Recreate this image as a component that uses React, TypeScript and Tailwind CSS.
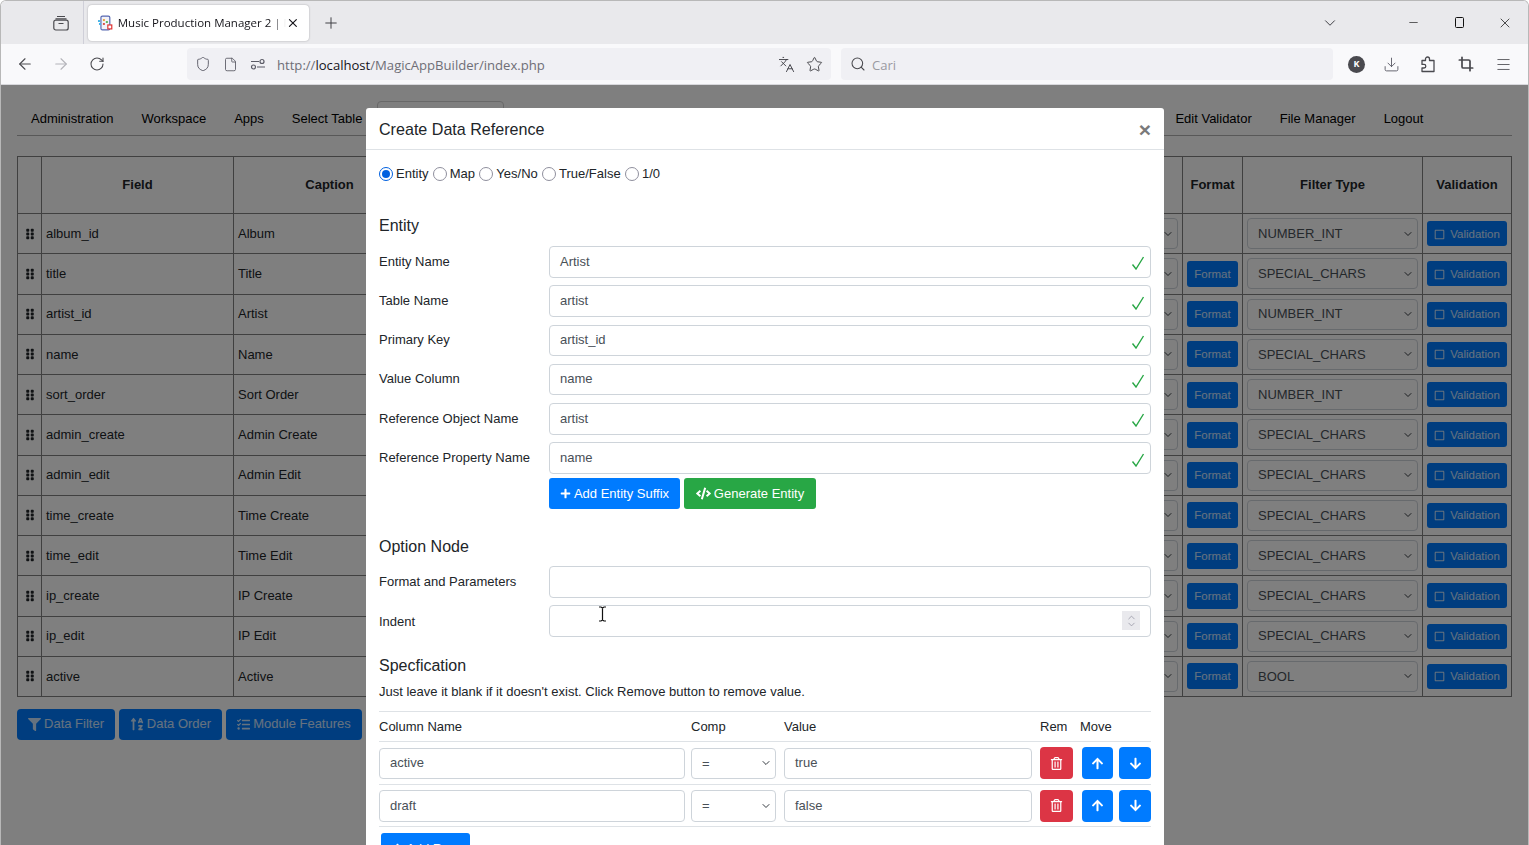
import React from "react";
import {
  ArrowLeft,
  ArrowRight,
  ChevronDown,
  Crop,
  Download,
  File,
  Languages,
  Menu,
  Minus,
  Plus,
  RotateCw,
  Search,
  Shield,
  Star,
  X,
} from "lucide-react";
import {
  FaArrowDown,
  FaArrowUp,
  FaCode,
  FaFilter,
  FaGripVertical,
  FaPlus,
  FaRegSquare,
  FaRegTrashAlt,
  FaSortAlphaUp,
  FaTasks,
} from "react-icons/fa";

const rows = [
  { field: "album_id", caption: "Album", filter: "NUMBER_INT", format: false },
  { field: "title", caption: "Title", filter: "SPECIAL_CHARS", format: true },
  { field: "artist_id", caption: "Artist", filter: "NUMBER_INT", format: true },
  { field: "name", caption: "Name", filter: "SPECIAL_CHARS", format: true },
  { field: "sort_order", caption: "Sort Order", filter: "NUMBER_INT", format: true },
  { field: "admin_create", caption: "Admin Create", filter: "SPECIAL_CHARS", format: true },
  { field: "admin_edit", caption: "Admin Edit", filter: "SPECIAL_CHARS", format: true },
  { field: "time_create", caption: "Time Create", filter: "SPECIAL_CHARS", format: true },
  { field: "time_edit", caption: "Time Edit", filter: "SPECIAL_CHARS", format: true },
  { field: "ip_create", caption: "IP Create", filter: "SPECIAL_CHARS", format: true },
  { field: "ip_edit", caption: "IP Edit", filter: "SPECIAL_CHARS", format: true },
  { field: "active", caption: "Active", filter: "BOOL", format: true },
];

const entityFields = [
  { label: "Entity Name", value: "Artist" },
  { label: "Table Name", value: "artist" },
  { label: "Primary Key", value: "artist_id" },
  { label: "Value Column", value: "name" },
  { label: "Reference Object Name", value: "artist" },
  { label: "Reference Property Name", value: "name" },
];

const radios = [
  { label: "Entity", checked: true },
  { label: "Map", checked: false },
  { label: "Yes/No", checked: false },
  { label: "True/False", checked: false },
  { label: "1/0", checked: false },
];

const TabGroupIcon = () => (
  <svg width="16" height="16" viewBox="0 0 16 16" fill="none" stroke="#4a4a4f" strokeWidth="1.2">
    <path d="M4 1.500h8" />
    <path d="M2.500 3.800h11" />
    <rect x="0.800" y="5.200" width="14.400" height="9.800" rx="2" />
    <path d="M5.500 8.500h5" />
  </svg>
);

const Favicon = () => (
  <svg width="16" height="16" viewBox="0 0 16 16">
    <rect x="4" y="1" width="9" height="14" rx="1.500" fill="#f2f2f8" stroke="#5566b0" strokeWidth="1.200" />
    <rect x="1" y="5" width="2" height="2" fill="#45b4e8" />
    <rect x="2" y="8" width="2" height="2" fill="#45b4e8" />
    <rect x="6" y="4" width="2" height="2" fill="#e9a23b" />
    <rect x="9" y="6" width="2" height="2" fill="#5cb85c" />
    <rect x="6" y="8" width="2" height="2" fill="#d9534f" />
    <rect x="11" y="10" width="4" height="4" fill="#fff" stroke="#e03131" strokeWidth="1.200" />
  </svg>
);

const PermIcon = () => (
  <svg width="16" height="16" viewBox="0 0 16 16" fill="none" stroke="#5b5b66" strokeWidth="1.2">
    <path d="M1 5.500h8" />
    <circle cx="12" cy="5.500" r="2" />
    <path d="M7 11h8" />
    <circle cx="3.500" cy="11" r="2" />
  </svg>
);

const PuzzleIcon = () => (
  <svg width="16" height="17" viewBox="0 0 16 17" fill="none" stroke="#4a4a4f" strokeWidth="1.3" strokeLinejoin="round">
    <path d="M2 4.500h3.500V3a2 2 0 0 1 4 0v1.500H14v11H2v-3.500h2a1.800 1.800 0 0 0 0-3.600H2z" />
  </svg>
);

const CheckMark = () => (
  <svg width="14" height="14" viewBox="0 0 14 14" fill="none" stroke="#28a745" strokeWidth="1.4">
    <path d="M1.500 8.500 L5 13 L12.500 1" />
  </svg>
);

const IBeam = () => (
  <svg width="9" height="16" viewBox="0 0 9 16" fill="none" stroke="#111" strokeWidth="1.2">
    <path d="M1 1h2l1.500 1 1.500-1h2M4.500 2v12M1 15h2l1.500-1 1.500 1h2" />
  </svg>
);

const Field = ({ value, check }: { value?: string; check?: boolean }) => (
  <div className="flex h-[31.500px] flex-1 items-center justify-between rounded-[4px] border border-[#ced4da] bg-white pb-[1px] pl-[10px] pr-[5px] text-[#495057]">
    <span>{value}</span>
    {check && (
      <span className="mt-[4px]">
        <CheckMark />
      </span>
    )}
  </div>
);

const SelectBox = ({ value, className }: { value: string; className: string }) => (
  <div
    className={`flex items-center justify-between rounded-[4px] border border-[#ced4da] bg-white pl-[10px] pr-[3px] text-[#495057] ${className}`}
  >
    <span>{value}</span>
    <ChevronDown size={12} strokeWidth={2} className="text-[#343a40]" />
  </div>
);

const Radio = ({ checked }: { checked: boolean }) =>
  checked ? (
    <span className="flex h-[14px] w-[14px] items-center justify-center rounded-full border-[1.5px] border-[#0060df] bg-white">
      <span className="h-[8px] w-[8px] rounded-full bg-[#0060df]" />
    </span>
  ) : (
    <span className="h-[14px] w-[14px] rounded-full border-[1.5px] border-[#8f8f9d] bg-white" />
  );

const PageButton = ({ icon, label, width }: { icon: React.ReactNode; label: string; width: string }) => (
  <div className={`flex h-[31px] items-center justify-center gap-[3px] rounded-[4px] bg-[#007bff] text-white/80 ${width}`}>
    {icon}
    {label}
  </div>
);

const IconButton = ({ className, children }: { className: string; children: React.ReactNode }) => (
  <div className={`flex h-[32px] items-center justify-center rounded-[4px] text-white ${className}`}>
    {children}
  </div>
);

const SpecRow = ({ column, value }: { column: string; value: string }) => (
  <div className="grid grid-cols-[312px_93px_256px_42px_37px_32px] items-center border-b border-[#dee2e6] pb-[4.500px] pt-[5px]">
    <div className="mr-[6px] flex">
      <Field value={column} />
    </div>
    <SelectBox value="=" className="mr-[8px] h-[31.500px]" />
    <div className="mr-[8px] flex">
      <Field value={value} />
    </div>
    <IconButton className="mr-[9px] bg-[#dc3545]">
      <FaRegTrashAlt size={13} />
    </IconButton>
    <IconButton className="mr-[6px] bg-[#007bff]">
      <FaArrowUp size={13} />
    </IconButton>
    <IconButton className="bg-[#007bff]">
      <FaArrowDown size={13} />
    </IconButton>
  </div>
);

const BrowserChrome = () => (
  <div className="font-['Open_Sans',sans-serif] text-[12px] text-[#15141a]">
    <div className="flex h-[43px] items-center bg-[#e9e9ec]">
      <div className="flex h-full w-[83px] items-center justify-end border-r border-[#cfcfd8] pr-[14px]">
        <TabGroupIcon />
      </div>
      <div className="ml-[4px] flex h-[36px] w-[221px] items-center rounded-[4px] bg-white pl-[9px] pr-[9px] shadow-[0_0_2px_rgba(0,0,0,0.3)]">
        <Favicon />
        <span className="ml-[5px] w-[171px] overflow-hidden whitespace-nowrap text-[11.500px] [mask-image:linear-gradient(to_right,black_92%,transparent)]">
          Music Production Manager 2 | M
        </span>
        <X size={14} strokeWidth={2} />
      </div>
      <Plus size={18} strokeWidth={1.3} className="ml-[13px] text-[#3c3c42]" />
      <div className="flex-1" />
      <ChevronDown size={18} strokeWidth={1.3} className="mr-[68px] text-[#3c3c42]" />
      <Minus size={13} strokeWidth={1.2} className="mr-[35px] text-[#111]" />
      <div className="mr-[33px] h-[11px] w-[9px] rounded-[1.500px] border border-[#111]" />
      <X size={16} strokeWidth={1.1} className="mr-[15px] text-[#111]" />
    </div>
    <div className="flex h-[40px] items-center bg-[#f9f9fb]">
      <ArrowLeft size={18} strokeWidth={1.5} className="ml-[15px] text-[#4a4a4f]" />
      <ArrowRight size={18} strokeWidth={1.5} className="ml-[18px] text-[#b4b4ba]" />
      <RotateCw size={16} strokeWidth={1.6} className="ml-[19px] text-[#4a4a4f]" />
      <div className="ml-[82px] flex h-[32px] w-[644px] items-center rounded-[4px] bg-[#f0f0f4] pl-[8px] pr-[8px] text-[13.100px] text-[#6e6e76]">
        <Shield size={16} strokeWidth={1.4} className="text-[#5b5b66]" />
        <File size={15} strokeWidth={1.4} className="ml-[12px] text-[#5b5b66]" />
        <span className="ml-[12px]">
          <PermIcon />
        </span>
        <span className="ml-[11px] pt-[3px]">
          http://<span className="text-[#15141a]">localhost</span>/MagicAppBuilder/index.php
        </span>
        <div className="flex-1" />
        <Languages size={17} strokeWidth={1.3} className="text-[#3c3c42]" />
        <Star size={17} strokeWidth={1.4} className="ml-[11px] text-[#4a4a4f]" />
      </div>
      <div className="ml-[10px] flex h-[32px] w-[492px] items-center rounded-[4px] bg-[#f0f0f4] pl-[9px] text-[13.100px] text-[#9a9aa2]">
        <Search size={16} strokeWidth={1.6} className="text-[#4a4a4f]" />
        <span className="ml-[6px] pt-[3px]">Cari</span>
      </div>
      <div className="ml-[15px] flex h-[17px] w-[17px] items-center justify-center rounded-full bg-[#4a4a4f] text-[9px] font-bold text-white">
        K
      </div>
      <Download size={17} strokeWidth={1.3} className="ml-[18px] text-[#5b5b66]" />
      <span className="ml-[20px]">
        <PuzzleIcon />
      </span>
      <Crop size={16} strokeWidth={2.6} className="ml-[22px] text-[#4a4a4f]" />
      <Menu size={17} strokeWidth={1.2} className="ml-[21px] text-[#4a4a4f]" />
    </div>
  </div>
);

const PageBehind = () => (
  <div className="flex-1 bg-white px-[16px] pt-[16px] font-['Liberation_Sans',sans-serif] text-[13px] text-[#212529]">
    <div className="flex h-[35px] border-b border-[#b0b0b0] text-black">
      {["Administration", "Workspace", "Apps", "Select Table"].map((item) => (
        <div key={item} className="flex items-center px-[14px] pt-[1px]">
          {item}
        </div>
      ))}
      <div className="ml-[1px] h-[35px] w-[127px] rounded-t-[4px] border border-[#d0d0d0]" />
      <div className="w-[657px]" />
      {["Edit Validator", "File Manager", "Logout"].map((item) => (
        <div key={item} className="flex items-center px-[14px] pt-[1px]">
          {item}
        </div>
      ))}
    </div>
    <table className="mt-[20px] w-[1494px] table-fixed border-collapse">
      <colgroup>
        <col className="w-[24px]" />
        <col className="w-[192px]" />
        <col className="w-[192px]" />
        <col className="w-[757px]" />
        <col className="w-[60px]" />
        <col className="w-[180px]" />
        <col className="w-[89px]" />
      </colgroup>
      <thead>
        <tr className="h-[57px] font-bold">
          <th className="border border-[#808080]" />
          <th className="border border-[#808080]">Field</th>
          <th className="border border-[#808080]">Caption</th>
          <th className="border border-[#808080]" />
          <th className="border border-[#808080]">Format</th>
          <th className="border border-[#808080]">Filter Type</th>
          <th className="border border-[#808080]">Validation</th>
        </tr>
      </thead>
      <tbody>
        {rows.map((row) => (
          <tr key={row.field} className="h-[40.25px]">
            <td className="border border-[#808080] pl-[6px]">
              <FaGripVertical size={12} className="text-[#212529]" />
            </td>
            <td className="border border-[#808080] px-[4px]">{row.field}</td>
            <td className="border border-[#808080] px-[4px]">{row.caption}</td>
            <td className="border border-[#808080] px-[4px]">
              <SelectBox value="" className="ml-auto h-[31px] w-[180px]" />
            </td>
            <td className="border border-[#808080] px-[4px]">
              {row.format && (
                <div className="flex h-[26px] items-center justify-center rounded-[3px] bg-[#007bff] pt-[1px] text-[11.500px] text-white/80">
                  Format
                </div>
              )}
            </td>
            <td className="border border-[#808080] px-[4px]">
              <SelectBox value={row.filter} className="h-[31px]" />
            </td>
            <td className="border border-[#808080] px-[4px]">
              <div className="flex h-[25px] items-center justify-center gap-[5px] rounded-[3px] bg-[#007bff] pt-[1px] text-[11.500px] text-white/80">
                <FaRegSquare size={11} />
                Validation
              </div>
            </td>
          </tr>
        ))}
      </tbody>
    </table>
    <div className="mt-[11.500px] flex gap-[4px]">
      <PageButton icon={<FaFilter size={13} />} label="Data Filter" width="w-[98px]" />
      <PageButton icon={<FaSortAlphaUp size={14} />} label="Data Order" width="w-[103px]" />
      <PageButton icon={<FaTasks size={13} />} label="Module Features" width="w-[136px]" />
    </div>
  </div>
);

const Modal = () => (
  <div className="absolute left-[365px] top-[107px] h-[737px] w-[798px] overflow-hidden rounded-t-[3px] bg-white font-['Liberation_Sans',sans-serif] text-[13px] text-[#212529]">
    <div className="flex h-[42px] items-center justify-between border-b border-[#dee2e6] pl-[13px] pr-[13px] pt-[2px]">
      <span className="text-[16.100px]">Create Data Reference</span>
      <span className="text-[21px] font-bold leading-none text-[#7a7a7a]">×</span>
    </div>
    <div className="px-[13px]">
      <div className="mt-[16px] flex h-[16px] items-center gap-[4.250px]">
        {radios.map((radio) => (
          <label key={radio.label} className="flex items-center gap-[3px]">
            <Radio checked={radio.checked} />
            {radio.label}
          </label>
        ))}
      </div>
      <div className="mt-[34px] text-[16px] leading-[20px]">Entity</div>
      <div className="mt-[10px] flex flex-col">
        {entityFields.map((field) => (
          <div key={field.label} className="flex h-[39.3px] items-start">
            <div className="w-[170px] pt-[5.500px]">{field.label}</div>
            <Field value={field.value} check />
          </div>
        ))}
      </div>
      <div className="-mt-[3.500px] ml-[170px] flex gap-[4px]">
        <div className="flex h-[31px] w-[131px] items-center justify-center gap-[3px] rounded-[3px] bg-[#007bff] text-white">
          <FaPlus size={11} />
          Add Entity Suffix
        </div>
        <div className="flex h-[31px] w-[132px] items-center justify-center gap-[3px] rounded-[3px] bg-[#28a745] text-white">
          <FaCode size={15} />
          Generate Entity
        </div>
      </div>
      <div className="mt-[28px] text-[16px] leading-[20px]">Option Node</div>
      <div className="mt-[9px] flex h-[39px] items-start">
        <div className="w-[170px] pt-[5.500px]">Format and Parameters</div>
        <Field />
      </div>
      <div className="relative flex h-[40px] items-start">
        <div className="w-[170px] pt-[6.500px]">Indent</div>
        <Field />
        <div className="absolute right-[11px] top-[6px] flex h-[19px] w-[18px] flex-col items-center justify-center bg-[#e9e9ed] text-[#8f8f9d]">
          <ChevronDown size={11} strokeWidth={1.6} className="-mb-[2px] rotate-180" />
          <ChevronDown size={11} strokeWidth={1.6} className="-mt-[2px]" />
        </div>
        <div className="absolute left-[219px] top-[1px]">
          <IBeam />
        </div>
      </div>
      <div className="mt-[11px] text-[16px] leading-[20px]">Specfication</div>
      <div className="mt-[7px] leading-[18px]">Just leave it blank if it doesn't exist. Click Remove button to remove value.</div>
      <div className="mt-[10px] border-t border-[#dee2e6]">
        <div className="grid h-[30px] grid-cols-[312px_93px_256px_40px_71px] items-center border-b border-[#dee2e6]">
          <span>Column Name</span>
          <span>Comp</span>
          <span>Value</span>
          <span>Rem</span>
          <span>Move</span>
        </div>
        <SpecRow column="active" value="true" />
        <SpecRow column="draft" value="false" />
        <div className="ml-[2px] mt-[5.500px] flex h-[31px] w-[89px] items-center justify-center gap-[3px] rounded-[3px] bg-[#007bff] text-white">
          <FaPlus size={11} />
          Add Row
        </div>
      </div>
    </div>
  </div>
);

export default function App() {
  return (
    <div className="relative flex h-[845px] w-[1529px] flex-col overflow-hidden rounded-t-[6px] border-x border-t border-[#b8b8b8] bg-white">
      <BrowserChrome />
      <div className="relative flex flex-1 flex-col overflow-hidden border-t border-[#d8d8dc]">
        <PageBehind />
        <div className="absolute inset-0 bg-black/50" />
      </div>
      <Modal />
    </div>
  );
}
